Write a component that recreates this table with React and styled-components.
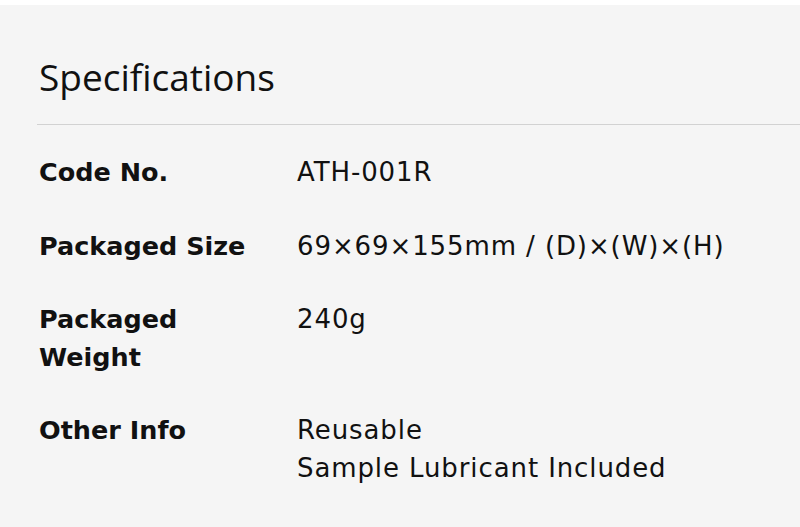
import React from 'react'
import styled, { createGlobalStyle } from 'styled-components'

const GlobalStyle = createGlobalStyle`
   html, body {
      margin: 0;
      padding: 0;
      background: #ffffff;
   }
`

const Section = styled.section`
   margin-top: 5px;
   min-height: 522px;
   background: #f5f5f5;
   padding: 50px 0 0 39px;
   box-sizing: border-box;
`

const Title = styled.h2`
   margin: 0 0 0 -2px;
   padding: 0 0 25px 2px;
   font-family: 'Open Sans', sans-serif;
   font-weight: 400;
   font-size: 37px;
   line-height: 44px;
   color: #111;
   border-bottom: 1px solid #d2d2d2;
`

const SpecList = styled.dl`
   margin: 0;
   padding-top: 29px;
   display: grid;
   grid-template-columns: 258px 1fr;
   row-gap: 36px;
   font-family: 'DejaVu Sans', Verdana, sans-serif;
   line-height: 37.5px;
   color: #111;
`

const Label = styled.dt`
   margin: 0;
   font-size: 25.5px;
   font-weight: 700;
   max-width: 230px;
`

const Value = styled.dd`
   margin: 0;
   font-size: 26px;
   letter-spacing: 0.9px;
   font-weight: 400;
`

const specs = [
   { label: 'Code No.', value: ['ATH-001R'] },
   { label: 'Packaged Size', value: ['69×69×155mm / (D)×(W)×(H)'] },
   { label: 'Packaged Weight', value: ['240g'] },
   { label: 'Other Info', value: ['Reusable', 'Sample Lubricant Included'] },
]

const App = () => {
   return (
      <>
         <GlobalStyle />
         <Section>
            <Title>Specifications</Title>
            <SpecList>
               {specs.map((s) => (
                  <React.Fragment key={s.label}>
                     <Label>{s.label}</Label>
                     <Value>
                        {s.value.map((v) => (
                           <div key={v}>{v}</div>
                        ))}
                     </Value>
                  </React.Fragment>
               ))}
            </SpecList>
         </Section>
      </>
   )
}

export default App
